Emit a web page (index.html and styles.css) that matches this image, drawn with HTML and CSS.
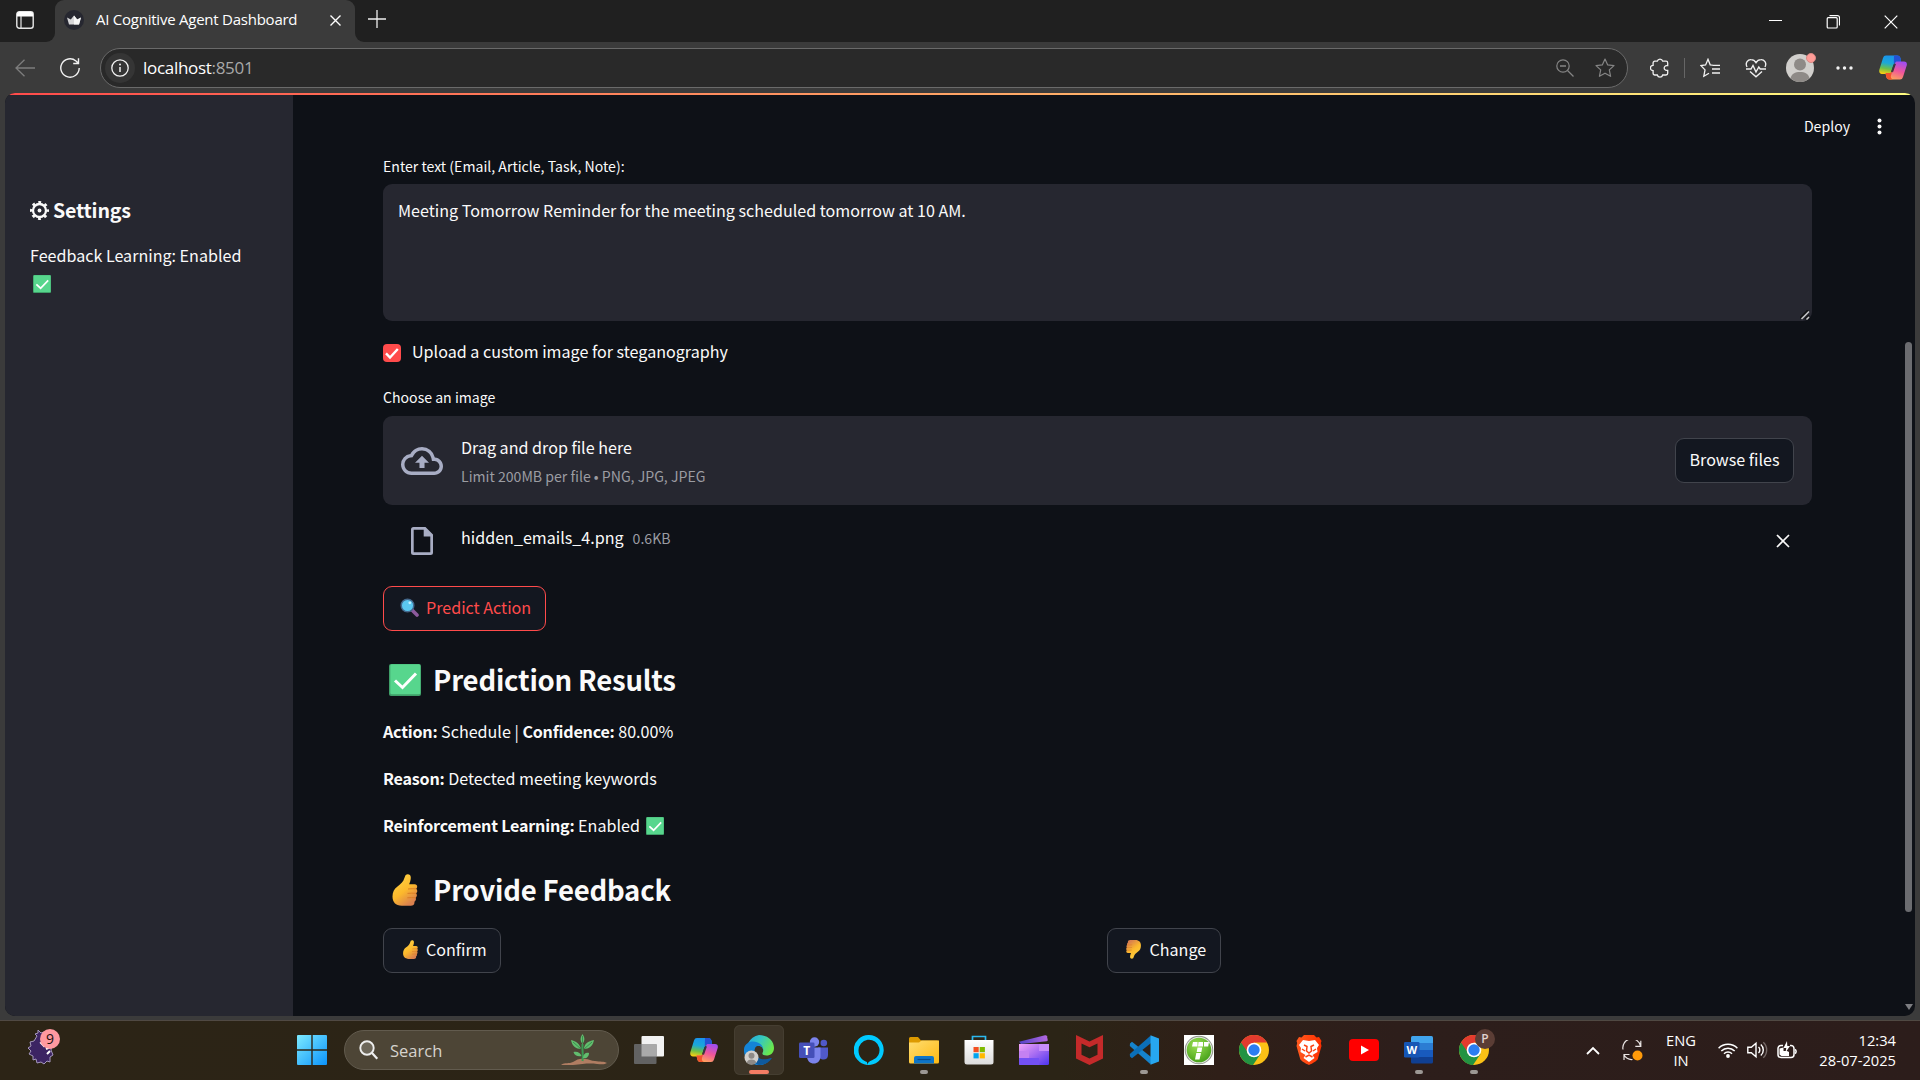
FILE: index.html
```html
<!DOCTYPE html>
<html lang="en">
<head>
<meta charset="utf-8">
<title>AI Cognitive Agent Dashboard</title>
<link rel="stylesheet" href="styles.css">
</head>
<body>
<svg class="defs" width="0" height="0" aria-hidden="true">
  <defs>
    <linearGradient id="thumbFill" x1="0" y1="0" x2=".6" y2="1"><stop offset="0" stop-color="#ffd84a"/><stop offset=".6" stop-color="#fcb92c"/><stop offset="1" stop-color="#d9804e"/></linearGradient>
    <linearGradient id="cpA" x1=".4" y1="0" x2=".2" y2="1"><stop offset="0" stop-color="#1a93ec"/><stop offset=".4" stop-color="#1ba8d8"/><stop offset=".7" stop-color="#6cc04a"/><stop offset="1" stop-color="#ffd00f"/></linearGradient>
    <linearGradient id="cpB" x1=".7" y1="0" x2=".3" y2="1"><stop offset="0" stop-color="#a04df0"/><stop offset=".5" stop-color="#f0569a"/><stop offset="1" stop-color="#ffa858"/></linearGradient>
    <linearGradient id="win" x1="0" y1="0" x2="1" y2="1"><stop offset="0" stop-color="#7deaff"/><stop offset="1" stop-color="#0b93fb"/></linearGradient>
    <linearGradient id="edgeA" x1="0" y1="0" x2="1" y2=".5"><stop offset="0" stop-color="#22a5e6"/><stop offset=".5" stop-color="#35c8c0"/><stop offset="1" stop-color="#6be84a"/></linearGradient>
    <linearGradient id="folder" x1="0" y1="0" x2="1" y2="1"><stop offset="0" stop-color="#ffdd70"/><stop offset="1" stop-color="#fdb913"/></linearGradient>
    <linearGradient id="clipTop" x1="0" y1="0" x2="1" y2="0"><stop offset="0" stop-color="#5142c8"/><stop offset="1" stop-color="#b468e0"/></linearGradient>
    <linearGradient id="clipBody" x1="0" y1="0" x2="1" y2="1"><stop offset="0" stop-color="#f3a4f8"/><stop offset=".5" stop-color="#a66cf2"/><stop offset="1" stop-color="#4c34f0"/></linearGradient>
    <linearGradient id="bag" x1="0" y1="0" x2="0" y2="1"><stop offset="0" stop-color="#fff"/><stop offset="1" stop-color="#dcdcdc"/></linearGradient>
    <linearGradient id="braveFill" x1="0" y1="0" x2="1" y2="0"><stop offset="0" stop-color="#ff5a1f"/><stop offset="1" stop-color="#ff3000"/></linearGradient>
    <radialGradient id="greenBall" cx=".4" cy=".3" r=".8"><stop offset="0" stop-color="#9be052"/><stop offset="1" stop-color="#3f9b14"/></radialGradient>
  </defs>
  <symbol id="check" viewBox="0 0 32 32"><rect x="0" y="0" width="32" height="32" rx="2" fill="#3f9f69"/><rect x="1.3" y=".3" width="30" height="30" rx="1.5" fill="#57d68d"/><path d="M6 16.5l7.5 7L27 9.5" fill="none" stroke="#fff" stroke-width="3"/></symbol>
  <symbol id="thumb" viewBox="0 0 26 32"><path d="M13.500 1.200C15.500-.4 19 .2 18.800 4c-.1 2.300-1 4.700-1.700 6.300h5.600c2.600 0 3.300 3.200 1.500 4.500 1.500 1.200 1.400 3.500-.1 4.500 1.200 1.200 1 3.500-.5 4.400.9 1.400.1 3.400-1.200 4 .4 2.500-1.200 4.100-3.600 4.100h-9C3.500 31.800.5 28 .5 22.500c0-4.600 1.700-7.500 4.700-9.800 3.400-2.600 6.300-5.300 7-8.200z" fill="url(#thumbFill)"/><path d="M16 15c3-.4 5.500-.3 8.200-.2M15.500 19.400c3-.3 5.600-.3 8.600-.1M15.300 23.800c3-.2 5.400-.2 8.300-.1" fill="none" stroke="#d97a23" stroke-width=".9"/></symbol>
  <symbol id="copilot" viewBox="0 0 28 26"><path d="M7 1h11c2 0 3 1 3.600 3L22 8h-4c-2 0-3.200 1-3.800 3L12 18c-.5 1.300-1 1.400-2 1.400H3C.6 19.400-.2 17.500.4 15L4 3.500C4.600 1.800 5.500 1 7 1z" fill="url(#cpA)"/><path d="M15 1h3.500c1.700 0 2.600 1 3.100 3L22 8h-4c-1.500 0-2.500.4-3.200 1.500z" fill="#2451d4"/><path d="M21 25H10.500c-2 0-2.800-1-3.300-3l-.7-3.500H10c2 0 3-1 3.600-2.600L16 9c.5-1.500 1-2 2.500-2H25c2.500 0 3.300 1.700 2.700 4L24 22.500c-.6 1.700-1.500 2.500-3 2.500z" fill="url(#cpB)"/><path d="M14.600 10L12 17.500l2 .3 3-8.500z" fill="#3a3540"/><path d="M6.500 18.500H10c1.700 0 2.800-.8 3.400-2.300L12 21c-.5 2 .2 3.200 1.800 4h-3.300c-2 0-2.800-1-3.300-3z" fill="#f2542c"/></symbol>
  <symbol id="chrome" viewBox="0 0 30 30"><circle cx="15" cy="15" r="15" fill="#fbc116"/><path d="M15 15L2 7.500A15 15 0 0 0 14 30l7.500-11z" fill="#229342"/><path d="M2 7.500A15 15 0 0 1 28 7.500H15v7l-6 3z" fill="#e33b2e"/><circle cx="15" cy="15" r="7.300" fill="#fff"/><circle cx="15" cy="15" r="5.700" fill="#2b7df0"/></symbol>
  <symbol id="person" viewBox="0 0 28 28"><circle cx="14" cy="14" r="14" fill="#d1cfcc"/><circle cx="14" cy="10.500" r="6" fill="#8e8a87"/><path d="M4.500 24.300c1-4.500 4.500-6.300 9.500-6.300s8.500 1.800 9.500 6.300a14 14 0 0 1-19 0z" fill="#8e8a87"/></symbol>
  <symbol id="star" viewBox="0 0 20 20"><path d="M10 1l2.700 5.900 6.300.7-4.700 4.300 1.300 6.400L10 15.200l-5.600 3.100 1.300-6.400L1 7.600l6.300-.7z" fill="none" stroke="currentColor" stroke-width="1.200" stroke-linejoin="round"/></symbol>
</svg>

<div class="screen">
  <header class="tabstrip">
    <div class="strip-left">
      <svg width="18" height="18" viewBox="0 0 18 18"><rect x=".8" y=".8" width="16.400" height="16.400" rx="2.500" fill="none" stroke="#e8e8e8" stroke-width="1.400"/><path d="M1 3a2 2 0 0 1 2-2h12a2 2 0 0 1 2 2v2.500H1z" fill="#fff"/><path d="M5 5v12" stroke="#e8e8e8" stroke-width="1.200"/></svg>
    </div>
    <div class="tab-wrap">
      <div class="tab">
        <svg width="20" height="20" viewBox="0 0 20 20"><circle cx="10" cy="10" r="10" fill="#262730"/><path d="M3 7.500l3.800 2L10 5.500l3.200 4 3.800-2-2 7H5z" fill="#d6d6d8"/><path d="M10 5.500l3.200 4 3.800-2-2 7h-5z" fill="#f6f6f6"/></svg>
        <span class="tab-title">AI Cognitive Agent Dashboard</span>
        <svg class="tab-close" width="11" height="11" viewBox="0 0 11 11"><path d="M.5.5l10 10M10.500.5l-10 10" stroke="#fff" stroke-width="1.400"/></svg>
      </div>
    </div>
    <div class="strip-right">
      <svg class="plus" width="18" height="18" viewBox="0 0 18 18"><path d="M9 0v18M0 9h18" stroke="#eee" stroke-width="1.300"/></svg>
      <div class="window-controls">
        <svg width="14" height="14" viewBox="0 0 14 14"><path d="M1 5.500h13" stroke="#fff"/></svg>
        <svg width="14" height="14" viewBox="0 0 14 14"><rect x="1.200" y="2.700" width="10" height="10.300" rx="1" fill="none" stroke="#fff" stroke-width="1.200"/><path d="M3.500 .6h8c1.300 0 2 .7 2 2v8" fill="none" stroke="#fff" stroke-width="1.200"/></svg>
        <svg width="14" height="14" viewBox="0 0 14 14"><path d="M.7.700l12.600 12.600M13.300.7L.7 13.300" stroke="#fff" stroke-width="1.200"/></svg>
      </div>
    </div>
  </header>

  <nav class="toolbar">
    <svg class="back" width="20" height="18" viewBox="0 0 20 18"><path d="M20 9H1M9.500.7L1 9l8.500 8.300" fill="none" stroke="#7d7d7d" stroke-width="1.300"/></svg>
    <svg class="reload" width="20" height="20" viewBox="0 0 20 20"><path d="M19.200 10A9.200 9.200 0 1 1 16 3l2.300 2.300M18.500.2v5.300h-5.300" fill="none" stroke="#f2f2f2" stroke-width="1.400"/></svg>
    <div class="address">
      <span class="info"><svg width="18" height="18" viewBox="0 0 18 18"><circle cx="9" cy="9" r="8.200" fill="none" stroke="#f2f2f2" stroke-width="1.300"/><path d="M9 8v5" stroke="#f2f2f2" stroke-width="1.500"/><circle cx="9" cy="5.600" r="1" fill="#f2f2f2"/></svg></span>
      <span class="url">localhost<span class="port">:8501</span></span>
      <svg class="zoom-out" width="18" height="18" viewBox="0 0 18 18"><circle cx="7" cy="7" r="6.200" fill="none" stroke="#858585" stroke-width="1.200"/><path d="M4 7h6M11.500 11.500l6 6" stroke="#858585" stroke-width="1.300"/></svg>
      <svg class="fav-star" width="20" height="20"><use href="#star"/></svg>
    </div>
    <div class="actions">
      <svg width="20" height="20" viewBox="0 0 20 20"><path d="M4.800 3.200h2.500a2.800 2.800 0 0 1 5.400 0H16a1.700 1.700 0 0 1 1.700 1.700v2.800h-1.200a2.300 2.300 0 1 0 0 4.600h1.200v3a1.700 1.700 0 0 1-1.700 1.700h-3.300a2.800 2.800 0 0 1-5.400 0H4.800a1.700 1.700 0 0 1-1.700-1.700v-2.600a2.700 2.700 0 0 1 0-5.400V4.900a1.700 1.700 0 0 1 1.700-1.700z" fill="none" stroke="#f0f0f0" stroke-width="1.300"/></svg>
      <span class="divider"></span>
      <svg class="favourites" width="21" height="20" viewBox="0 0 21 20"><path d="M12.500 7.200l-2.300-.4L8 1.300 5.600 7 1 7.600l4 4.300-1.200 6.400L9 15.300M12.500 7.300H20M12 11h8M12 15h8" fill="none" stroke="#f0f0f0" stroke-width="1.300"/></svg>
      <svg class="heart" width="22" height="20" viewBox="0 0 22 20"><path d="M2 9C-.2 4.500 3 1.500 6 1.600c2.300 0 4 1.200 5 3 1-1.800 2.700-3 5-3 3-.1 6.200 2.900 4 7.400M5 13.500l6 5.300 6-5.300M1 11h5l2-3.500 3 6.500 2.800-5 1.400 2H21" fill="none" stroke="#f0f0f0" stroke-width="1.400"/></svg>
      <span class="profile"><svg width="28" height="28"><use href="#person"/></svg><i class="dot"></i></span>
      <svg class="more" width="17" height="4" viewBox="0 0 17 4"><g fill="#f2f2f2"><circle cx="2" cy="2" r="1.700"/><circle cx="8.500" cy="2" r="1.700"/><circle cx="15" cy="2" r="1.700"/></g></svg>
      <svg class="assistant" width="28" height="27"><use href="#copilot"/></svg>
    </div>
  </nav>

  <div class="page">
    <div class="decoration"></div>
    <aside class="sidebar">
      <h3 class="side-title">
        <svg width="19" height="19" viewBox="0 0 19 19"><circle cx="9.500" cy="9.500" r="6.500" fill="none" stroke="#fafafa" stroke-width="2.300"/><circle cx="9.500" cy="9.500" r="8.400" fill="none" stroke="#fafafa" stroke-width="2.200" stroke-dasharray="2.900 3.697" stroke-dashoffset="1.450"/><circle cx="9.500" cy="9.500" r="1.900" fill="#fafafa"/></svg>
        <span>Settings</span>
      </h3>
      <p class="side-text">Feedback Learning: Enabled</p>
      <svg class="side-check" width="18" height="18"><use href="#check"/></svg>
    </aside>
    <main class="main">
      <div class="deploy"><span>Deploy</span><svg width="5" height="17" viewBox="0 0 5 17"><g fill="#fafafa"><circle cx="2.500" cy="2.500" r="2"/><circle cx="2.500" cy="8.500" r="2"/><circle cx="2.500" cy="14.500" r="2"/></g></svg></div>

      <label class="label">Enter text (Email, Article, Task, Note):</label>
      <div class="textarea">
        <span class="area-text">Meeting Tomorrow Reminder for the meeting scheduled tomorrow at 10 AM.</span>
        <svg class="grip" width="10" height="10" viewBox="0 0 10 10"><path d="M0 8L8 0M5 9l4-4" stroke="#111" stroke-width="1.500"/><path d="M1.500 9L9 1.500M6.500 9.500l2.500-2.500" stroke="#c8c8c8" stroke-width="1.500"/></svg>
      </div>

      <div class="checkrow">
        <span class="box"><svg width="18" height="18" viewBox="0 0 18 18"><path d="M3 9.300l4 4.200L14.800 5" fill="none" stroke="#fff" stroke-width="2.400"/></svg></span>
        <span class="body">Upload a custom image for steganography</span>
      </div>

      <label class="label choose">Choose an image</label>
      <div class="uploader">
        <svg width="42" height="28" viewBox="0 0 24 16"><path d="M19.350 6.040A7.490 7.490 0 0 0 12 0C9.110 0 6.600 1.640 5.350 4.040A5.994 5.994 0 0 0 0 10c0 3.310 2.690 6 6 6h13c2.760 0 5-2.240 5-5 0-2.640-2.050-4.780-4.650-4.960zM19 14H6c-2.210 0-4-1.790-4-4 0-2.050 1.530-3.760 3.560-3.970l1.070-.11.5-.95A5.469 5.469 0 0 1 12 2c2.620 0 4.880 1.860 5.390 4.430l.3 1.500 1.530.11A2.980 2.980 0 0 1 22 11c0 1.650-1.350 3-3 3zM8 9h2.550v3h2.900V9H16l-4-4z" fill="#a8adc4"/></svg>
        <div class="drop">
          <span class="body">Drag and drop file here</span>
          <span class="hint">Limit 200MB per file • PNG, JPG, JPEG</span>
        </div>
        <button class="btn browse"><span>Browse files</span></button>
      </div>

      <div class="file">
        <svg class="file-icon" width="22" height="28" viewBox="0 0 22 28"><path d="M2.500 0h12L22 7.500v18a2.500 2.500 0 0 1-2.500 2.500h-17A2.500 2.500 0 0 1 0 25.500v-23A2.500 2.500 0 0 1 2.500 0zM2.700 2.700v22.600h16.600V9.500H12.700V2.700z" fill="#a8adc4"/></svg>
        <span class="body name">hidden_emails_4.png</span><span class="hint size">0.6KB</span>
        <svg class="remove" width="14" height="14" viewBox="0 0 14 14"><path d="M1 1l12 12M13 1L1 13" stroke="#fafafa" stroke-width="1.700"/></svg>
      </div>

      <button class="btn predict">
        <svg width="19" height="19" viewBox="0 0 19 19"><path d="M12 12l5 5" stroke="#8c5a9c" stroke-width="3.600" stroke-linecap="round"/><circle cx="7.500" cy="7.500" r="6.300" fill="#5bc8f0" stroke="#44688c" stroke-width="1.500"/><circle cx="9.800" cy="4.800" r="1.400" fill="#c4efff"/></svg>
        <span>Predict Action</span>
      </button>

      <h2 class="heading results"><svg width="32" height="32"><use href="#check"/></svg><span>Prediction Results</span></h2>
      <p class="para"><b>Action:</b> Schedule | <b>Confidence:</b> 80.00%</p>
      <p class="para"><b>Reason:</b> Detected meeting keywords</p>
      <p class="para"><b>Reinforcement Learning:</b> Enabled <svg width="18" height="18"><use href="#check"/></svg></p>

      <h2 class="heading feedback"><svg width="32" height="32"><use href="#thumb"/></svg><span>Provide Feedback</span></h2>
      <div class="columns">
        <div><button class="btn confirm"><svg width="19" height="19"><use href="#thumb"/></svg><span>Confirm</span></button></div>
        <div><button class="btn change"><svg class="down" width="19" height="19"><use href="#thumb"/></svg><span>Change</span></button></div>
      </div>
      <div class="scroll-thumb"></div>
      <div class="scroll-arrow"></div>
    </main>
  </div>

  <footer class="taskbar">
    <div class="widget">
      <svg width="28" height="38" viewBox="0 0 28 38"><path d="M9 8l-2-2 3-1 0-3 3 3 3-1 0 3 5 3 3 6-1 6 2 5-3 2 0 5-3-1-3 3-3-2-4 1-1-4-3 1 0-4-4-2 2-3-3-3 3-2-1-4 4-1z" fill="#3c2463" stroke="#a598bd" stroke-width="1"/><path d="M13 15l3-2 2 3-2 2zM18 21l4-2M19 26l3-3" stroke="#fff" stroke-width="2" fill="#fff"/></svg>
      <span class="badge">9</span>
    </div>
    <div class="apps">
      <div class="slot"><svg width="30" height="30" viewBox="0 0 30 30"><path d="M0 1a1 1 0 0 1 1-1h13.300v14.300H0zM15.700 0H29a1 1 0 0 1 1 1v13.300H15.700zM0 15.700h14.300V30H1a1 1 0 0 1-1-1zM15.700 15.700H30V29a1 1 0 0 1-1 1H15.700z" fill="url(#win)"/></svg></div>
      <div class="search">
        <svg width="20" height="20" viewBox="0 0 20 20"><circle cx="8" cy="8" r="6.700" fill="#6d675a" stroke="#eee" stroke-width="1.900"/><path d="M12.800 12.800l5.500 6" stroke="#eee" stroke-width="2.200"/></svg>
        <span>Search</span>
        <svg class="plant" width="46" height="32" viewBox="0 0 46 32"><path d="M0 31c4-3 8-1 12-3 4-3 8-4 12-3 4 0 6 2 10 2 5 1 9 0 12 2-3 2-6 1-10 1-8-1-14 0-24 1z" fill="#b07d62"/><path d="M21.500 27c1-6-.5-10 0-17" stroke="#3b9a52" stroke-width="2" fill="none"/><path d="M21.500 10c-3-4-2-7 0-10 2 3 3 6 0 10zM20 15c-5 0-9-3-10-9 5 1 9 4 10 9zM23 15c0-5 4-8 10-9-1 6-5 9-10 9zM20.500 22c-3 1-7 0-8-4 4-1 7 1 8 4zM22 24c0-4 3-6 6-5 0 4-3 6-6 5z" fill="#62bd6e"/><path d="M20 15l-8-7M23 15l8-7M21.500 9V2" stroke="#2e8546" stroke-width=".8"/></svg>
      </div>
      <div class="slot"><svg width="30" height="28" viewBox="0 0 30 28"><rect x="7.500" y="0" width="22.500" height="20.500" rx="1" fill="#f2f2f2"/><rect x="0" y="8" width="22.500" height="20" rx="1" fill="#626262"/><path d="M7.500 8h15v12.500h-15z" fill="#a9a9a9"/></svg></div>
      <div class="slot"><svg width="28" height="26"><use href="#copilot"/></svg></div>
      <div class="slot active"><svg width="30" height="30" viewBox="0 0 30 30"><path d="M15 0C24 0 30 6 30 13c0 5-3.500 7.500-7.500 7.500-3 0-4.500-1.300-4-2.500 1.700-3 .5-6.800-4-7.300C8 10 4 14 4.500 22A15 15 0 0 1 15 0z" fill="url(#edgeA)"/><path d="M0 14c.5-5 5-7.500 9-7.500 6 0 10.500 4 10.200 8.500-.2-2.500-2.500-4.300-5-4.200-3.500.2-4.700 5-2.700 9.200C13.500 24.500 18 28 24 27A15 15 0 0 1 0 14z" fill="#1484d8"/><path d="M11.200 17.500c1 5 5.800 9 15.800 5.500.5 0 .8.300.5.800A15 15 0 0 1 15 30c-5-1-6.500-8-3.800-12.500z" fill="#0f5a9e"/><g transform="translate(.5 15.500) scale(.5)"><circle cx="14" cy="14" r="14" fill="#d1cfcc"/><circle cx="14" cy="10.500" r="6" fill="#8e8a87"/><path d="M4.500 24.300c1-4.500 4.500-6.300 9.500-6.300s8.500 1.800 9.500 6.300a14 14 0 0 1-19 0z" fill="#8e8a87"/></g></svg></div>
      <div class="slot"><svg width="30" height="27" viewBox="0 0 30 27"><circle cx="15.500" cy="5" r="4.700" fill="#7b83eb"/><circle cx="24.800" cy="6" r="3.300" fill="#5059c9"/><path d="M19 10.500h10v7.500c0 3-2 4.500-4.500 4.500S19 21 19 18z" fill="#5059c9"/><path d="M8 10.500h13.500V19c0 5-3 7.500-6.700 7.500S8 24 8 19z" fill="#7b83eb"/><rect y="5.500" width="15.500" height="15.500" rx="1.300" fill="#454fb8"/><text x="7.700" y="17.700" class="glyph" text-anchor="middle" font-size="12">T</text></svg></div>
      <div class="slot"><svg width="30" height="30" viewBox="0 0 30 30"><path fill-rule="evenodd" d="M15 0a15 15 0 1 1-2 29.900V27C8 25.500 4.500 21 4.500 15.500a10.500 10.500 0 1 1 14 9.600c-3.500 1.300-5 3-5.500 4.800A15 15 0 0 1 15 0z" fill="#00caff"/></svg></div>
      <div class="slot open"><svg width="30" height="27" viewBox="0 0 30 27"><path d="M0 1.500A1.500 1.500 0 0 1 1.500 0H9l3 3.500h16a2 2 0 0 1 2 2V8H0z" fill="#dd9a00"/><path d="M0 5.500h10l2.500-2H30V25a1.500 1.500 0 0 1-1.500 1.500h-27A1.500 1.500 0 0 1 0 25z" fill="url(#folder)"/><path d="M5 26.500V21a2 2 0 0 1 2-2h16a2 2 0 0 1 2 2v5.500z" fill="#0e75c8"/><path d="M8.500 22.500h13" stroke="#064c8c" stroke-width="1.200"/></svg></div>
      <div class="slot"><svg width="30" height="30" viewBox="0 0 30 30"><path d="M8.500 6V1.500h13V6" fill="none" stroke="#2cb9ee" stroke-width="1.700"/><path d="M.5 5h29v22a2.500 2.500 0 0 1-2.500 2.500H3A2.500 2.500 0 0 1 .5 27z" fill="url(#bag)"/><path d="M9.500 12h5.200v5.200H9.500z" fill="#f25022"/><path d="M15.700 12h5.200v5.200h-5.200z" fill="#7fba00"/><path d="M9.500 18.200h5.200v5.200H9.500z" fill="#00a4ef"/><path d="M15.700 18.200h5.200v5.200h-5.200z" fill="#ffb900"/></svg></div>
      <div class="slot"><svg width="30" height="30" viewBox="0 0 30 30"><path d="M0 6.800L26 .2c1-.2 1.700.2 2 1l.7 3.500c.1.900-.2 1.300-1 1.500L2 9z" fill="url(#clipTop)"/><path d="M0 9h30v19.500a1.500 1.500 0 0 1-1.500 1.500h-27A1.500 1.500 0 0 1 0 28.500z" fill="url(#clipBody)"/><path d="M20 9h10v7H20z" fill="#c78cfa"/><path d="M0 16h10v7H0z" fill="#c481f2"/><path d="M0 23h20v7H1.500A1.500 1.500 0 0 1 0 28.500z" fill="#7350f4"/></svg></div>
      <div class="slot"><svg width="27" height="30" viewBox="0 0 27 30"><path d="M0 0l13.500 6.500L27 0v23.500L13.500 30 0 23.500zM5.500 8.500v11.300l8 3.800 8-3.800V8.500l-8 3.800z" fill="#c42a2a" fill-rule="evenodd"/></svg></div>
      <div class="slot open"><svg width="30" height="30" viewBox="0 0 30 30"><path d="M1 8.500l2-1.700 20 16-1.500 6.500L.8 11z" fill="#1583cc"/><path d="M1 21.500l2 1.700 20-16L21.500.7.800 19z" fill="#0b6fb8"/><path d="M21.500.2L30 3.500v23l-8.500 3.300V0z" fill="#27a7f0"/></svg></div>
      <div class="slot"><svg width="30" height="30" viewBox="0 0 30 30"><path d="M0 0h30v30H0z" fill="#fff"/><circle cx="15" cy="15" r="14.300" fill="#8d9388"/><circle cx="15" cy="15" r="13.300" fill="#e3e6e0"/><circle cx="15" cy="15" r="12.300" fill="url(#greenBall)"/><path d="M9 7h4.500v4.500H8zM14.500 7H19v4.500h-5zM20 7h5l-.8 4.500H20zM13.500 12.500h4.700l-.8 4.500h-4.700zM12.300 18H17l-1.500 6.500H11z" fill="#fff"/></svg></div>
      <div class="slot"><svg width="30" height="30"><use href="#chrome"/></svg></div>
      <div class="slot"><svg width="26" height="30" viewBox="0 0 26 30"><path d="M8 0h10l2.500 2.500L23 2l2.500 4-.7 2 .7 3-3.700 13c-.5 1.500-5 4.500-8.800 6-3.800-1.500-8.300-4.500-8.800-6L.5 11l.7-3-.7-2L3 2l2.500.5z" fill="url(#braveFill)"/><path d="M7 5l6 1 6-1 4 5-2 3 .5 4-5 3 2 3-5.500 4-5.500-4 2-3-5-3L5 13l-2-3z" fill="#fff"/><path d="M8 10l3 1.500L10.500 16l2.500 2 2.500-2-.5-4.500 3-1.500M6 14l3 2M20 14l-3 2M9.500 22l3.500-2 3.500 2" fill="none" stroke="#fb4414" stroke-width="1.500"/></svg></div>
      <div class="slot"><svg width="30" height="22" viewBox="0 0 30 22"><rect width="30" height="22" rx="4" fill="#f00"/><path d="M12 6.500l8 4.500-8 4.500z" fill="#fff"/></svg></div>
      <div class="slot open"><svg width="30" height="28" viewBox="0 0 30 28"><path d="M7 1.500A1.500 1.500 0 0 1 8.500 0h19A1.500 1.500 0 0 1 29 1.500V7H7z" fill="#41a5ee"/><path d="M7 7h22v7H7z" fill="#2b7cd3"/><path d="M7 14h22v7H7z" fill="#185abd"/><path d="M7 21h22v5a1.500 1.500 0 0 1-1.500 1.500h-19A1.500 1.500 0 0 1 7 26z" fill="#103f91"/><rect y="6" width="15.500" height="15.500" rx="1.300" fill="#1656b5"/><text x="7.700" y="17.700" class="glyph" text-anchor="middle" font-size="11">W</text></svg></div>
      <div class="slot open"><svg width="30" height="30"><use href="#chrome"/></svg><span class="initial">P</span></div>
    </div>
    <div class="tray">
      <svg class="chevron" width="14" height="9" viewBox="0 0 14 9"><path d="M1 8l6-6 6 6" fill="none" stroke="#fff" stroke-width="1.800"/></svg>
      <svg class="sync" width="21" height="21" viewBox="0 0 21 21"><path d="M1 9.500a8.600 8.600 0 0 1 17.500-3.500M18.800.8v5.500h-5.500M2 20v-5.500h5.500M2 14.500c1 3 4.500 5.500 8.500 5" fill="none" stroke="#e8e3e2" stroke-width="1.200"/><circle cx="15.500" cy="15.500" r="5" fill="#ff9a0a"/></svg>
      <div class="lang"><span>ENG</span><span>IN</span></div>
      <svg class="wifi" width="20" height="15" viewBox="0 0 20 15"><g fill="none" stroke="#fff" stroke-width="1.500"><path d="M.6 5.200a13.200 13.200 0 0 1 18.800 0M3.300 8a9.500 9.500 0 0 1 13.400 0M6 10.700a5.700 5.700 0 0 1 8 0"/></g><circle cx="10" cy="13" r="1.900" fill="#fff"/></svg>
      <svg class="volume" width="21" height="18" viewBox="0 0 21 18"><g fill="none" stroke="#fff" stroke-width="1.400"><path d="M.8 6.200h3.500L9 2.200v13.600l-4.700-4H.8zM11.500 6a4 4 0 0 1 0 6M13.800 3.500a7.300 7.300 0 0 1 0 11"/><path d="M16.300 1.300a10.500 10.500 0 0 1 0 15.400" stroke="#766a68"/></g></svg>
      <svg class="battery" width="20" height="18" viewBox="0 0 20 18"><path d="M6 4.500H4A3 3 0 0 0 1 7.500v6a3 3 0 0 0 3 3h10a3 3 0 0 0 3-3v-6a3 3 0 0 0-3-3h-1" fill="none" stroke="#fff" stroke-width="1.500"/><path d="M2.500 7.500l4-1V10H10l2 1v4H4.500l-2-1.500z" fill="#fff"/><path d="M10 0L6.500 7h2.800L8.500 11.500 13 5h-2.700z" fill="#fff"/><path d="M18 8.500c1.500.5 1.500 3.500 0 4" stroke="#fff" stroke-width="1.500" fill="none"/></svg>
      <div class="clock"><span>12:34</span><span>28-07-2025</span></div>
    </div>
  </footer>
</div>
</body>
</html>
```
FILE: styles.css
```css
* { box-sizing: border-box; }
body { margin: 0; background: #3b3b3b; overflow: hidden; }
svg { display: block; flex: none; }
h2, h3, p { margin: 0; }
.defs { position: absolute; }

.screen {
  width: 1920px; height: 1080px;
  display: flex; flex-direction: column;
  font-family: "Open Sans", "Noto Sans", sans-serif;
  color: #fff;
}

/* Browser window */
.tabstrip { height: 42px; display: flex; background: #3b3b3b; }
.strip-left { width: 55px; background: #202020; border-bottom-right-radius: 9px; padding: 11px 0 0 16px; }
.tab-wrap { width: 300px; background: linear-gradient(#202020 50%, #3b3b3b 50%); }
.tab { height: 42px; background: #3b3b3b; border-radius: 9px 9px 0 0; display: flex; align-items: center; padding: 0 14px 2px 9px; }
.tab-title { margin: -2px 0 0 12px; font-size: 15px; letter-spacing: -0.24px; white-space: nowrap; }
.tab-close { margin-left: auto; }
.strip-right { flex: 1; background: #202020; border-bottom-left-radius: 9px; display: flex; justify-content: space-between; padding: 10px 22px 0 13px; }
.window-controls { display: flex; gap: 44px; padding-top: 5px; }

.toolbar { height: 51px; display: flex; align-items: center; padding-left: 15px; background: #3b3b3b; }
.reload { margin-left: 25px; }
.address { margin-left: 20px; width: 1528px; height: 40px; border: 1px solid #6a6a6a; border-radius: 20px; background: #292929; display: flex; align-items: center; padding: 0 12px 0 4px; }
.info { width: 30px; height: 30px; border-radius: 15px; background: #353535; display: grid; place-items: center; }
.url { margin-left: 8px; font-size: 17px; letter-spacing: -0.3px; }
.port { color: #a8a8a8; }
.zoom-out { margin-left: auto; }
.fav-star { margin-left: 21px; color: #858585; }
.actions { display: flex; align-items: center; margin-left: 22px; }
.divider { width: 1px; height: 20px; background: #666; margin-left: 14px; }
.favourites { margin-left: 15px; }
.heart { margin-left: 24px; }
.profile { position: relative; margin-left: 19px; }
.more { margin-left: 22px; }
.assistant { margin-left: 26px; }
.dot { position: absolute; right: -2px; top: -1px; width: 10px; height: 10px; border-radius: 50%; background: #ff9c97; border: 1px solid #d98884; }

/* Dashboard page */
.page {
  position: relative; height: 923px; margin: 0 5px; display: flex;
  border-radius: 10px; overflow: hidden; background: #0e1117;
  font-family: "Noto Sans CJK JP", sans-serif; font-size: 16.100px; color: #fafafa;
}
.decoration { position: absolute; left: 0; right: 0; top: 0; height: 2px; background: linear-gradient(90deg, #ff4b4b, #fffd80); }
.sidebar { width: 288px; background: #262730; padding: 101px 0 0 25px; }
.side-title { display: flex; align-items: center; gap: 4px; height: 32px; font-size: 19.600px; line-height: 32px; font-weight: 700; letter-spacing: -0.2px; }
.side-text { margin-top: 17px; height: 26px; line-height: 24px; white-space: nowrap; }
.side-check { margin: 6px 0 0 3px; }
.main { position: relative; flex: 1; display: flex; flex-direction: column; padding: 61px 103px 0 90px; }
.deploy { position: absolute; right: 33px; top: 21px; display: flex; align-items: center; gap: 27px; height: 24px; font-size: 14.100px; }

.label { font-size: 14.100px; line-height: 24px; height: 24px; }
.textarea { position: relative; margin-top: 6px; height: 137px; background: #262730; border-radius: 9px; padding: 13px 15px; line-height: 26px; }
.grip { position: absolute; right: 2px; bottom: 1px; }
.checkrow { margin-top: 19px; height: 24px; display: flex; align-items: center; gap: 11px; }
.box { width: 18px; height: 18px; margin-top: 1px; border-radius: 4px; background: #ff4b4b; }
.body { line-height: 24px; white-space: nowrap; }
.checkrow .body { margin-top: -2px; }
.choose { margin-top: 21px; }
.uploader { margin-top: 7px; height: 89px; background: #262730; border-radius: 9px; display: flex; align-items: center; padding: 0 18px; }
.drop { margin: 1px 0 0 18px; display: flex; flex-direction: column; gap: 5px; }
.hint { font-size: 14.100px; line-height: 24px; color: #9b9ca2; }
.btn {
  height: 45px; display: flex; align-items: center; white-space: nowrap; padding: 0 0 2px;
  border: 1px solid #41444c; border-radius: 9px; background: #131720; color: #fafafa; font: inherit;
}
.btn span { margin-top: -1px; }
.browse { margin-left: auto; width: 119px; justify-content: center; }
.file { margin-top: 21px; height: 30px; display: flex; align-items: center; padding: 0 22px 0 28px; }
.name { margin: -8px 0 0 28px; }
.size { margin: -7px 0 0 9px; }
.remove { margin-left: auto; }
.predict { margin-top: 30px; width: 163px; border-color: #ff4b4b; color: #ff4b4b; padding-left: 16px; gap: 7px; }
.heading { display: flex; align-items: center; height: 40px; font-size: 27.500px; line-height: 40px; font-weight: 700; letter-spacing: -0.2px; padding-left: 6px; gap: 12px; }
.heading span { margin-top: -2px; }
.results { margin-top: 29px; margin-bottom: -2px; }
.para { margin-top: 21px; height: 26px; line-height: 24px; }
.para b { letter-spacing: -0.2px; }
.para svg { display: inline-block; vertical-align: -3px; margin-left: 3px; }
.feedback { margin-top: 31px; }
.columns { margin-top: 18px; display: grid; grid-template-columns: 1fr 1fr; gap: 18px; }
.confirm { width: 118px; padding-left: 17px; gap: 6px; }
.change { width: 114px; padding-left: 16px; gap: 7px; }
.down { transform: rotate(180deg); }
.scroll-thumb { position: absolute; right: 3px; top: 249px; width: 7px; height: 570px; border-radius: 4px; background: #6b6c70; }
.scroll-arrow { position: absolute; right: 2px; top: 911px; border: 4.5px solid transparent; border-top: 6px solid #7c7d81; border-bottom: 0; }

/* Taskbar */
.taskbar {
  margin-top: 4px; height: 60px; border-top: 1px solid #504943; padding-bottom: 1px; display: flex; align-items: center;
  background: linear-gradient(90deg, #2c2416 0, #2b2416 1060px, #2f1f18 1220px, #2d1e1b 1400px, #2c1d1b 1920px);
}
.widget { position: relative; width: 287px; height: 58px; padding: 7px 0 0 28px; }
.badge { position: absolute; left: 40px; top: 8px; width: 20px; height: 20px; border-radius: 50%; background: #ff99a0; color: #1d1010; font-size: 14px; line-height: 20px; text-align: center; }
.apps { display: flex; align-items: center; gap: 5px; }
.slot { position: relative; width: 50px; height: 50px; border-radius: 6px; display: grid; place-items: center; }
.slot.active { background: #3d3528; box-shadow: inset 0 0 0 1px #453e31; }
.slot.open::after, .slot.active::after { content: ""; position: absolute; bottom: 1px; left: 21px; width: 8px; height: 4px; border-radius: 2px; background: #9c9894; }
.slot.active::after { left: 15px; width: 20px; background: #f47c64; }
.glyph { font-family: "Open Sans", sans-serif; font-weight: 700; fill: #fff; }
.search { width: 275px; height: 40px; margin: 0 0 0 2px; border-radius: 20px; background: #4d4536; border: 1px solid #625b4e; display: flex; align-items: center; padding: 0 11px 0 14px; font-size: 16.500px; color: #d6d3cd; }
.search span { margin-left: 11px; }
.plant { margin-left: auto; }
.initial { position: absolute; left: 26px; top: 4px; width: 20px; height: 20px; border-radius: 50%; background: #5b3d35; color: #e0d3cf; font-size: 12px; font-weight: 600; line-height: 20px; text-align: center; }
.tray { margin-left: auto; padding-right: 24px; display: flex; align-items: center; font-size: 14.700px; line-height: 20px; }
.sync { margin-left: 22px; }
.lang { margin-left: 22px; width: 32px; display: flex; flex-direction: column; align-items: center; }
.wifi { margin-left: 21px; }
.volume { margin-left: 9px; }
.battery { margin-left: 9px; }
.clock { width: 99px; display: flex; flex-direction: column; align-items: flex-end; white-space: nowrap; }
```
